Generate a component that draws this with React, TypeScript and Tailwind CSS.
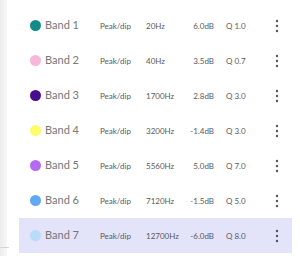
const bands = [
  { name: "Band 1", color: "#138b8b", freq: "20Hz", gain: "6.0dB", q: "Q 1.0" },
  { name: "Band 2", color: "#f7b6da", freq: "40Hz", gain: "3.5dB", q: "Q 0.7" },
  { name: "Band 3", color: "#440e8e", freq: "1700Hz", gain: "2.8dB", q: "Q 3.0" },
  { name: "Band 4", color: "#fdfd6a", freq: "3200Hz", gain: "-1.4dB", q: "Q 3.0" },
  { name: "Band 5", color: "#b46bf2", freq: "5560Hz", gain: "5.0dB", q: "Q 7.0" },
  { name: "Band 6", color: "#62a8f4", freq: "7120Hz", gain: "-1.5dB", q: "Q 5.0" },
  { name: "Band 7", color: "#b9dbfa", freq: "12700Hz", gain: "-6.0dB", q: "Q 8.0", selected: true },
];

function Dots() {
  return (
    <svg width="4" height="14" viewBox="0 0 4 14">
      <circle cx="2" cy="2" r="1.2" fill="#555" />
      <circle cx="2" cy="7" r="1.2" fill="#555" />
      <circle cx="2" cy="12" r="1.2" fill="#555" />
    </svg>
  );
}

export default function App() {
  return (
    <div className="w-[300px] h-[256px] flex bg-white overflow-hidden font-['Lato','Liberation_Sans',sans-serif]">
      <div className="w-[7px] shrink-0 flex flex-col bg-gradient-to-r from-[#ececec] to-[#f7f7f7]">
        <div className="flex-1" />
        <div className="h-px mb-[8px] w-[9px] bg-[#d6d6d6]" />
      </div>
      <div className="flex-1 pt-[8px] pl-[12px] pr-[8px]">
        {bands.map((b) => (
          <div
            key={b.name}
            className={`h-[35px] flex items-center ${b.selected ? "bg-[#e3e3f9]" : ""}`}
          >
            <div className="w-[11px] h-[11px] rounded-full ml-[11px]" style={{ background: b.color }} />
            <div className="w-[59px] pl-[4px] text-[11px] text-[#777]">{b.name}</div>
            <div className="w-[46px] text-[8px] text-[#5a5a5a]">Peak/dip</div>
            <div className="w-[40px] text-[8px] text-[#5a5a5a]">{b.freq}</div>
            <div className="w-[28px] text-right text-[8px] text-[#5a5a5a]">{b.gain}</div>
            <div className="w-[49px] ml-[12px] text-[8px] text-[#5a5a5a]">{b.q}</div>
            <Dots />
          </div>
        ))}
      </div>
    </div>
  );
}
